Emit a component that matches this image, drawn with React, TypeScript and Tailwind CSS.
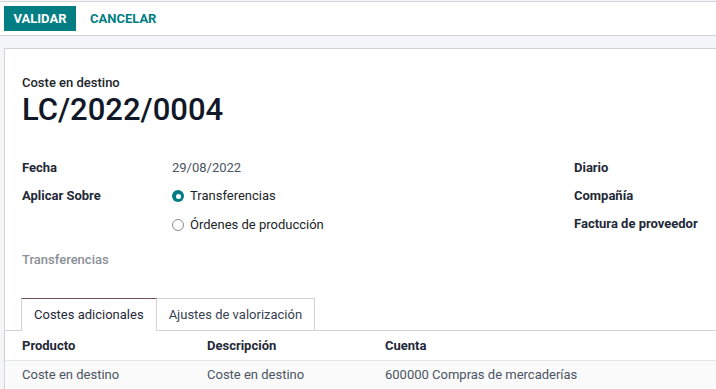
import React from 'react'

function Radio({ checked, label }: { checked?: boolean, label: string }) {
    return (
        <div className="flex items-center gap-[6px]">
            {checked ? (
                <span className="w-[12px] h-[12px] rounded-full bg-[#017e84] flex items-center justify-center">
                    <span className="w-[5px] h-[5px] rounded-full bg-white" />
                </span>
            ) : (
                <span className="w-[12px] h-[12px] rounded-full border border-[#8f8f8f] bg-white" />
            )}
            <span className="text-[#212529]">{label}</span>
        </div>
    )
}

export default function App() {
    return (
        <div
            className="w-[716px] h-[389px] overflow-hidden bg-[#f4f5f8] text-[13px] text-[#212529]"
            style={{ fontFamily: 'Roboto, "Noto Sans", sans-serif' }}
        >
            {/* control panel */}
            <div className="mt-px h-[35px] bg-white border-t border-b border-[#d3d3d8] flex items-center pl-[4px]">
                <button className="h-[25px] w-[72px] bg-[#017e84] text-white font-bold text-[13px] leading-none">
                    VALIDAR
                </button>
                <button className="h-[25px] pl-[14px] pr-[12px] text-[#017e84] font-bold text-[13px] leading-none">
                    CANCELAR
                </button>
            </div>

            {/* sheet */}
            <div className="mt-[12px] ml-[4px] bg-white border-t border-l border-[#d3d3d8] h-[400px]">
                <div className="pl-[17px] pt-[24px]">
                    <div className="font-medium leading-[20px]">Coste en destino</div>
                    <h1 className="text-[31px] font-medium leading-[36px] text-[#111827] mt-[-1px]">LC/2022/0004</h1>

                    <div className="flex mt-[26px]">
                        <div className="w-[552px] flex flex-col">
                            <div className="flex h-[28px] items-center">
                                <div className="w-[150px] font-bold text-[#1f2937]">Fecha</div>
                                <div className="text-[#4b5563]">29/08/2022</div>
                            </div>
                            <div className="flex">
                                <div className="w-[150px] font-bold text-[#1f2937] h-[28px] flex items-center">Aplicar Sobre</div>
                                <div className="flex flex-col">
                                    <div className="h-[28px] flex items-center"><Radio checked label="Transferencias" /></div>
                                    <div className="h-[29px] flex items-center"><Radio label="Órdenes de producción" /></div>
                                </div>
                            </div>
                        </div>
                        <div className="flex flex-col font-bold text-[#1f2937]">
                            <div className="h-[28px] flex items-center">Diario</div>
                            <div className="h-[28px] flex items-center">Compañía</div>
                            <div className="h-[28px] flex items-center whitespace-nowrap">Factura de proveedor</div>
                        </div>
                    </div>

                    <div className="mt-[11px] text-[#8a8f98] font-medium leading-[20px]">Transferencias</div>
                </div>

                {/* tabs */}
                <div className="mt-[28px] flex border-b border-[#d3d3d8] pl-[16px] h-[33px]">
                    <div className="px-[12px] border-t border-t-[#714b67] border-x border-x-[#d3d3d8] bg-white -mb-px flex items-center text-[#1f2937] h-[33px]">
                        Costes adicionales
                    </div>
                    <div className="px-[12px] border-t border-r border-[#d3d3d8] flex items-center text-[#374151]">
                        Ajustes de valorización
                    </div>
                </div>

                {/* table */}
                <div className="flex h-[30px] items-center font-bold text-[#1f2937] pl-[17px] border-b border-[#e5e7eb] shadow-[0_1px_2px_rgba(0,0,0,0.06)]">
                    <div className="w-[185px]">Producto</div>
                    <div className="w-[178px]">Descripción</div>
                    <div>Cuenta</div>
                </div>
                <div className="flex h-[27px] items-center text-[#4b5563] pl-[17px] bg-[#fafafa]">
                    <div className="w-[185px]">Coste en destino</div>
                    <div className="w-[178px]">Coste en destino</div>
                    <div>600000 Compras de mercaderías</div>
                </div>
            </div>
        </div>
    )
}
